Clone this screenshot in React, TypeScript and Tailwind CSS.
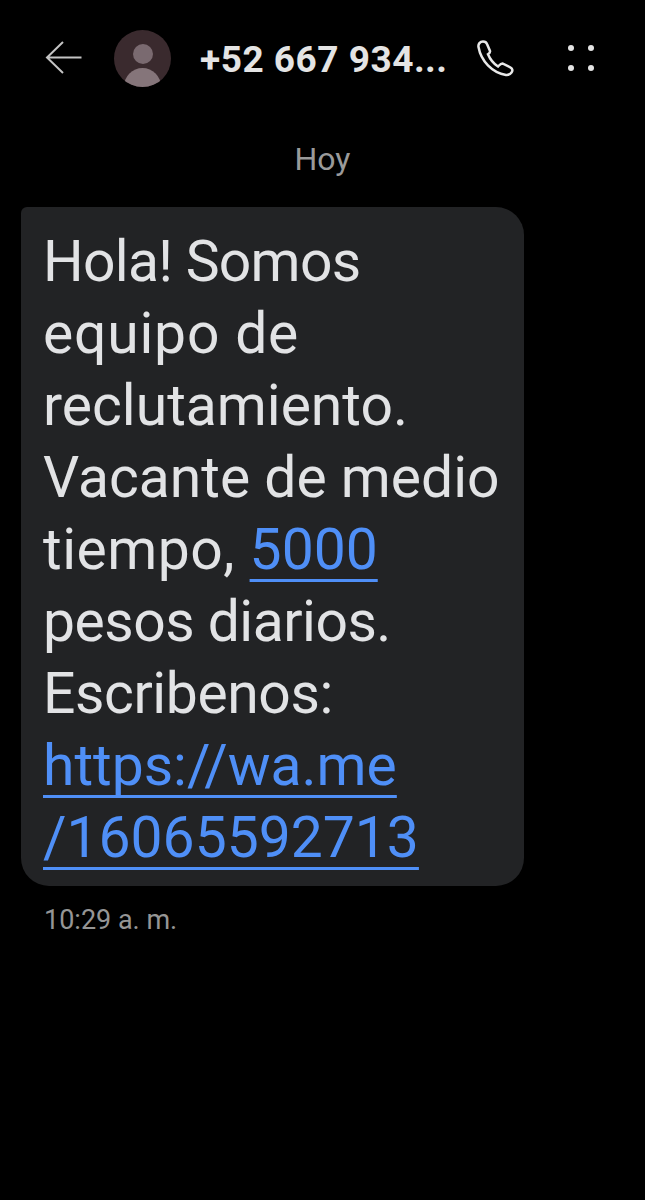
const linkClass =
  "text-[#4f8ff7] underline decoration-[3px] underline-offset-[10px] [text-decoration-skip-ink:none]";

const App = () => {
  return (
    <div className="min-h-[1200px] w-[645px] bg-black font-['Roboto',sans-serif] overflow-hidden">
      <header className="flex h-[116px] items-center pl-[45px]">
        <svg width="38" height="34" viewBox="0 0 38 34" fill="none" stroke="#c4c4c4" strokeWidth="2">
          <path d="M18 1 L2 16.500 L18 32 M2 16.500 H36.500" />
        </svg>
        <div className="ml-[31px] flex h-[57px] w-[57px] items-end justify-center overflow-hidden rounded-full bg-[#3a2a2e]">
          <div className="flex flex-col items-center">
            <div className="h-[20px] w-[20px] rounded-full bg-[#7a6a70]" />
            <div className="mt-[4px] h-[19px] w-[37px] rounded-t-full bg-[#85757a]" />
          </div>
        </div>
        <h1 className="ml-[29px] mt-[3px] w-[262px] text-[37px] font-bold tracking-[0.5px] whitespace-nowrap text-[#e4e4e4]">
          +52 667 934...
        </h1>
        <svg width="60" height="60" viewBox="0 0 60 60" fill="none" stroke="#e8e8e8" strokeWidth="2.500" className="ml-[3px] mt-[3px]">
          <path d="M13.500 17 C13 14 15 11.500 18 11.500 C20 11.500 21.500 12.500 22 14 L25 21 C25.300 22.300 24.500 23.300 23 24.200 C25 29 28.500 33.500 33 36.500 C34.500 35 35.500 33.500 37.500 33.500 L45.500 37.500 C47.500 38.700 48 40.500 46.500 42.500 C45 44.500 43 45.300 41 45 C27 42.500 16 31 13.500 17 Z" />
        </svg>
        <div className="ml-[43px] grid grid-cols-2 gap-x-[14px] gap-y-[14px]">
          <span className="h-[6px] w-[6px] rounded-full bg-[#e4e4e4]" />
          <span className="h-[6px] w-[6px] rounded-full bg-[#e4e4e4]" />
          <span className="h-[6px] w-[6px] rounded-full bg-[#e4e4e4]" />
          <span className="h-[6px] w-[6px] rounded-full bg-[#e4e4e4]" />
        </div>
      </header>
      <p className="mt-[25px] text-center text-[32px] leading-[36px] text-[#9a9a9a]">Hoy</p>
      <div className="ml-[21px] mt-[30px] w-[503px] rounded-[28px] rounded-tl-[6px] bg-[#222325] pb-[12px] pl-[22px] pt-[19px] text-[57px] leading-[72px] whitespace-nowrap text-[#e2e3e5]">
        <span className="tracking-[-0.7px]">Hola! Somos</span>
        <br />
        <span className="tracking-[0.8px]">equipo de</span>
        <br />
        reclutamiento.
        <br />
        Vacante de medio
        <br />
        <span className="tracking-[0.5px]">tiempo, </span>
        <span className={linkClass}>5000</span>
        <br />
        <span className="tracking-[-0.5px]">pesos diarios.</span>
        <br />
        <span className="tracking-[-0.4px]">Escribenos:</span>
        <br />
        <span className={linkClass}>https://wa.me</span>
        <br />
        <span className={linkClass}>/16065592713</span>
      </div>
      <p className="ml-[44px] mt-[16px] text-[27px] leading-[36px] text-[#959595]">10:29 a. m.</p>
    </div>
  );
};

export default App;
